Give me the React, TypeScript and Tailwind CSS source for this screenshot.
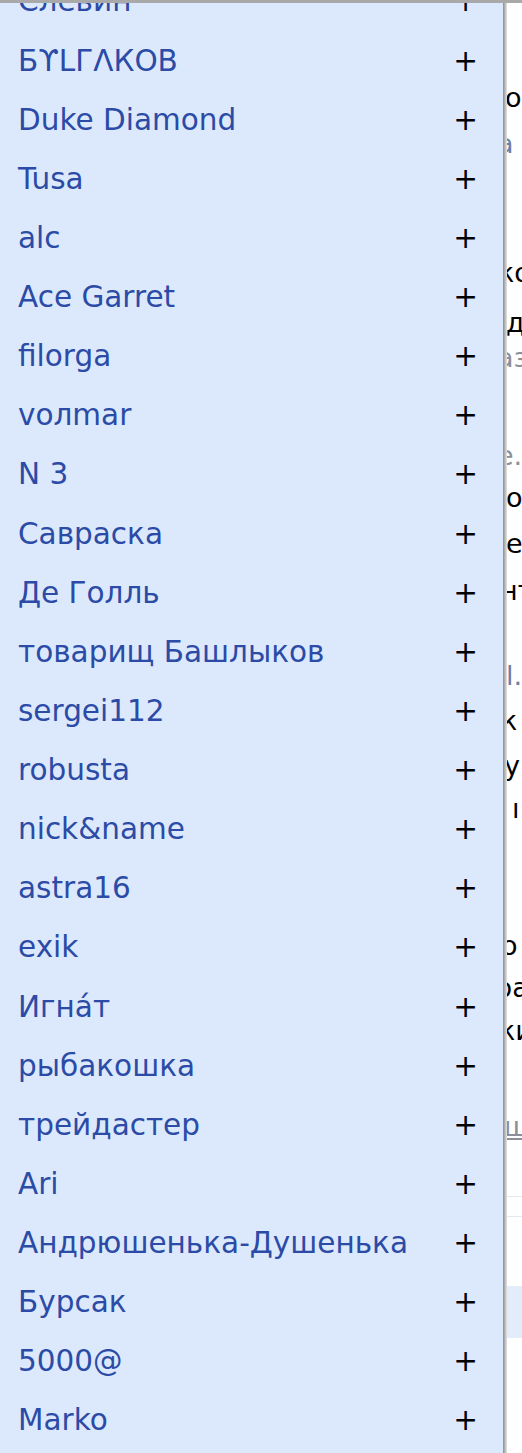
const names = [
  "Слевин",
  "БϒLГΛКОВ",
  "Duke Diamond",
  "Tusa",
  "alc",
  "Ace Garret",
  "filorga",
  "voлmar",
  "N 3",
  "Савраска",
  "Де Голль",
  "товарищ Башлыков",
  "sergei112",
  "robusta",
  "nick&name",
  "astra16",
  "exik",
  "Игна́т",
  "рыбакошка",
  "трейдастер",
  "Ari",
  "Андрюшенька-Душенька",
  "Бурсак",
  "5000@",
  "Marko",
];

// bits of the article behind the drawer: [centre y, text, indent, colour]
const behind: [number, string, string, string][] = [
  [97, "о", "-ml-[2px]", "text-black"],
  [143, "а", "-ml-[10px]", "text-[#6b7fa8]"],
  [272, "ко", "-ml-[9px]", "text-black"],
  [322, "д", "-ml-[1px]", "text-black"],
  [357, "аз", "-ml-[10px]", "text-[#8a8f99]"],
  [455, "е.", "-ml-[10px]", "text-[#8a8f99]"],
  [497, "о", "-ml-[1px]", "text-black"],
  [543, "е", "-ml-[1px]", "text-black"],
  [590, "нт", "-ml-[7px]", "text-black"],
  [675, "l.", "-ml-[1px]", "text-[#6b7fa8]"],
  [720, "к", "-ml-[6px]", "text-black"],
  [765, "у", "-ml-[3px]", "text-black"],
  [808, "ı", "ml-[5px]", "text-black"],
  [945, "о", "-ml-[6px]", "text-black"],
  [987, "ра", "-ml-[12px]", "text-black"],
  [1030, "ки", "-ml-[8px]", "text-black"],
];

const LINE = 30;

function Row({ name }: { name: string }) {
  return (
    <div className="flex h-[59.13px] items-center justify-between pl-[18px] pr-[25px]">
      <span className="whitespace-nowrap text-[#2b4ba6]">{name}</span>
      <span className="text-black">+</span>
    </div>
  );
}

export default function App() {
  let prev = 0;
  return (
    <div
      className="relative flex h-[1453px] w-[522px] overflow-hidden bg-white text-[29.5px] leading-normal"
      style={{ fontFamily: '"DejaVu Sans", sans-serif' }}
    >
      <aside className="w-[503px] shrink-0 overflow-hidden bg-[#dce9fc]">
        <div className="-mt-[28px]">
          {names.map((n) => (
            <Row key={n} name={n} />
          ))}
        </div>
      </aside>
      <div className="w-[4px] shrink-0 bg-gradient-to-r from-[#8c8c8c] to-[#e6e6e6]" />
      <main className="flex flex-1 flex-col overflow-hidden text-[27px]">
        {behind.map(([y, t, ml, c], i) => {
          const top = y - LINE / 2 - prev;
          prev = y + LINE / 2;
          return (
            <div
              key={i}
              className={`flex h-[30px] shrink-0 items-center whitespace-nowrap leading-none ${ml} ${c}`}
              style={{ marginTop: top }}
            >
              {t}
            </div>
          );
        })}
        <div className="mt-[68px] -ml-[3px] h-[30px] shrink-0 leading-none text-[#8a8f99] underline decoration-[#8a8f99]">ш</div>
        <div className="mt-[53px] h-[20px] shrink-0 border-t border-[#e3e9f3]" />
        <div className="h-[70px] shrink-0 border-t border-[#e3e9f3]" />
        <div className="h-[52px] shrink-0 bg-[#e2ecfb]" />
      </main>
      <div className="absolute inset-x-0 top-0 h-[3px] bg-[#a9a9a9]" />
    </div>
  );
}
